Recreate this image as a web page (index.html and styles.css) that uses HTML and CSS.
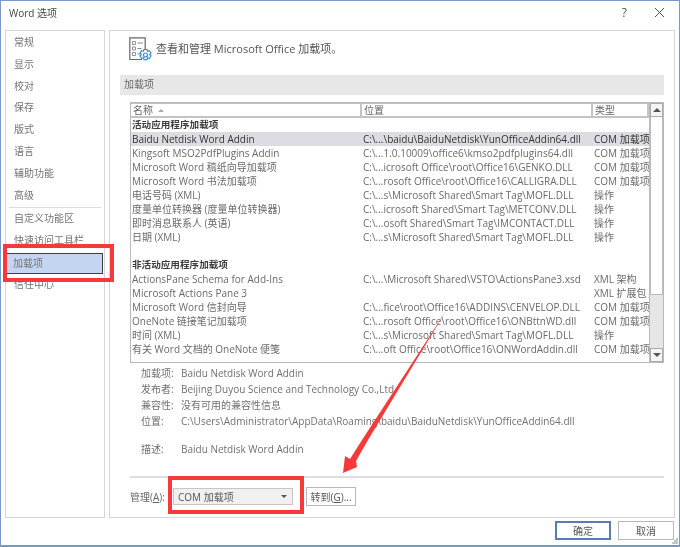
FILE: index.html
```html
<!DOCTYPE html>
<html lang="zh-CN">
<head>
<meta charset="utf-8">
<title>Word 选项</title>
<link rel="stylesheet" href="styles.css">
</head>
<body>
<div class="window">
  <header class="titlebar">
    <span class="title">Word 选项</span>
    <span class="help">?</span>
    <svg class="close" width="11" height="11" viewBox="0 0 11 11"><path d="M1 1l9 9M10 1l-9 9" stroke="#555" stroke-width="1" fill="none"/></svg>
  </header>
  <main class="main">
    <nav class="nav">
      <div class="nav-item">常规</div>
      <div class="nav-item">显示</div>
      <div class="nav-item">校对</div>
      <div class="nav-item">保存</div>
      <div class="nav-item">版式</div>
      <div class="nav-item">语言</div>
      <div class="nav-item">辅助功能</div>
      <div class="nav-item">高级</div>
      <div class="nav-sep"></div>
      <div class="nav-item">自定义功能区</div>
      <div class="nav-item">快速访问工具栏</div>
      <div class="nav-item selected">加载项</div>
      <div class="nav-item">信任中心</div>
    </nav>
    <section class="panel">
      <div class="heading">
        <svg class="heading-icon" width="24" height="25" viewBox="0 0 24 25">
          <path d="M13 22.500H.8V.8h15.400V13" fill="#fff" stroke="#666" stroke-width="1.200"/>
          <path d="M3.500 4.500h3v3h-3zM3.500 10h3v3h-3zM3.500 15.500h3v3h-3z" fill="none" stroke="#888" stroke-width=".9"/>
          <path d="M8.500 6h5.500M8.500 11.500h4M8.500 17h2.500" stroke="#888" stroke-width="1"/>
          <path d="M15 12.500h3l.5 1.800 1.800-.6 1.700 2.500-1.300 1.300 1.300 1.500-1.700 2.500-1.800-.7-.5 1.900h-3l-.5-1.900-1.800.7-1.700-2.500 1.300-1.500-1.300-1.300 1.700-2.500 1.800.6z" fill="#fff" stroke="#2f8fd8" stroke-width="1.200" stroke-linejoin="round"/>
          <circle cx="16.500" cy="18" r="2" fill="none" stroke="#2f8fd8" stroke-width="1.200"/>
        </svg>
        <span class="heading-text">查看和管理 Microsoft Office 加载项。</span>
      </div>
      <div class="section-bar">加载项</div>
      <div class="table-box">
        <div class="table">
          <div class="row head">
            <div class="th">名称 <i class="sort"></i></div>
            <div class="th">位置</div>
            <div class="th">类型</div>
          </div>
          <div class="group">活动应用程序加载项</div>
          <div class="row active"><span>Baidu Netdisk Word Addin</span><span>C:\...\baidu\BaiduNetdisk\YunOfficeAddin64.dll</span><span>COM 加载项</span></div>
          <div class="row"><span>Kingsoft MSO2PdfPlugins Addin</span><span>C:\...1.0.10009\office6\kmso2pdfplugins64.dll</span><span>COM 加载项</span></div>
          <div class="row"><span>Microsoft Word 稿纸向导加载项</span><span>C:\...icrosoft Office\root\Office16\GENKO.DLL</span><span>COM 加载项</span></div>
          <div class="row"><span>Microsoft Word 书法加载项</span><span>C:\...rosoft Office\root\Office16\CALLIGRA.DLL</span><span>COM 加载项</span></div>
          <div class="row"><span>电话号码 (XML)</span><span>C:\...s\Microsoft Shared\Smart Tag\MOFL.DLL</span><span>操作</span></div>
          <div class="row"><span>度量单位转换器 (度量单位转换器)</span><span>C:\...icrosoft Shared\Smart Tag\METCONV.DLL</span><span>操作</span></div>
          <div class="row"><span>即时消息联系人 (英语)</span><span>C:\...osoft Shared\Smart Tag\IMCONTACT.DLL</span><span>操作</span></div>
          <div class="row"><span>日期 (XML)</span><span>C:\...s\Microsoft Shared\Smart Tag\MOFL.DLL</span><span>操作</span></div>
          <div class="group spaced">非活动应用程序加载项</div>
          <div class="row"><span>ActionsPane Schema for Add-Ins</span><span>C:\...\Microsoft Shared\VSTO\ActionsPane3.xsd</span><span>XML 架构</span></div>
          <div class="row"><span>Microsoft Actions Pane 3</span><span></span><span>XML 扩展包</span></div>
          <div class="row"><span>Microsoft Word 信封向导</span><span>C:\...fice\root\Office16\ADDINS\CENVELOP.DLL</span><span>COM 加载项</span></div>
          <div class="row"><span>OneNote 链接笔记加载项</span><span>C:\...rosoft Office\root\Office16\ONBttnWD.dll</span><span>COM 加载项</span></div>
          <div class="row"><span>时间 (XML)</span><span>C:\...s\Microsoft Shared\Smart Tag\MOFL.DLL</span><span>操作</span></div>
          <div class="row"><span>有关 Word 文档的 OneNote 便笺</span><span>C:\...oft Office\root\Office16\ONWordAddin.dll</span><span>COM 加载项</span></div>
        </div>
        <div class="scrollbar">
          <div class="sb-btn"><i class="tri up"></i></div>
          <div class="sb-thumb"></div>
          <div class="sb-track"></div>
          <div class="sb-btn"><i class="tri down"></i></div>
        </div>
      </div>
      <dl class="details">
        <dt>加载项:</dt><dd>Baidu Netdisk Word Addin</dd>
        <dt>发布者:</dt><dd>Beijing Duyou Science and Technology Co.,Ltd</dd>
        <dt>兼容性:</dt><dd>没有可用的兼容性信息</dd>
        <dt>位置:</dt><dd>C:\Users\Administrator\AppData\Roaming\baidu\BaiduNetdisk\YunOfficeAddin64.dll</dd>
        <dt class="gap">描述:</dt><dd class="gap">Baidu Netdisk Word Addin</dd>
      </dl>
      <div class="manage">
        <span class="manage-label">管理(<u>A</u>):</span>
        <div class="combo"><span>COM 加载项</span><i class="tri down"></i></div>
        <button class="btn goto" type="button">转到(<u>G</u>)...</button>
      </div>
    </section>
  </main>
  <footer class="footer">
    <button class="btn action primary" type="button">确定</button>
    <button class="btn action" type="button">取消</button>
  </footer>
  <svg class="grip" width="8" height="8" viewBox="0 0 8 8"><path d="M5 1h2v2H5zM3 3h2v2H3zM5 3h2v2H5zM1 5h2v2H1zM3 5h2v2H3zM5 5h2v2H5z" fill="#c4c4c4"/></svg>
  <svg class="annotations" width="680" height="547" viewBox="0 0 680 547">
    <rect x="5" y="246" width="107" height="34" fill="none" stroke="#f63a3a" stroke-width="4"/>
    <rect x="170" y="478" width="132" height="34" fill="none" stroke="#f63a3a" stroke-width="4"/>
    <path d="M446 311L368 440L356 461L357 467L343 473L345 456L350 459L362 440Z" fill="#f63a3a"/>
  </svg>
</div>
</body>
</html>
```
FILE: styles.css
```css
* { box-sizing: border-box; }
html, body { margin: 0; padding: 0; background: #fff; }
body {
  width: 680px;
  height: 547px;
  overflow: hidden;
  font-family: "Open Sans", "Noto Sans CJK SC", sans-serif;
  font-size: 10px;
  color: #6a6a6a;
}
.window {
  position: relative;
  width: 680px;
  height: 547px;
  display: flex;
  flex-direction: column;
  border: 1px solid #7a97c6;
  border-bottom-width: 2px;
  background: #fff;
  filter: blur(.35px);
}
.titlebar {
  height: 29px;
  display: flex;
  align-items: center;
  padding: 0 14px 7px 8px;
  flex: none;
}
.title { font-size: 10px; color: #444; flex: 1; }
.help { font-size: 12px; color: #555; margin-right: 27px; }
.close { flex: none; }
.main {
  display: flex;
  gap: 4px;
  padding: 0 4px;
  height: 488px;
  flex: none;
}
.nav {
  flex: none;
  width: 100px;
  border: 1px solid #d6d6d6;
  padding: 1px 1px 0;
  display: flex;
  flex-direction: column;
}
.nav-item {
  height: 21.800px;
  line-height: 21.800px;
  padding-left: 7px;
  color: #737373;
}
.nav-sep {
  height: 1px;
  flex: none;
  background: #dcdcdc;
  margin: 1px 2px 0;
}
.nav-item.selected {
  background: #c3d5f0;
  border: 1px solid #3f3f3f;
  border-left: none;
  padding-left: 6px;
  line-height: 19px;
  margin-top: 1px;
  height: 21px;
}
.panel {
  flex: 1;
  min-width: 0;
  border: 1px solid #d6d6d6;
  padding: 6px 10px 0;
  display: flex;
  flex-direction: column;
}
.heading {
  display: flex;
  align-items: center;
  height: 25px;
  padding-left: 9px;
  gap: 3px;
  font-size: 11px;
  color: #555;
}
.heading-text { padding-bottom: 3px; }
.section-bar {
  margin-top: 13px;
  height: 20px;
  line-height: 18px;
  background: #e7e7e7;
  padding-left: 4px;
  color: #666;
}
.table-box {
  margin: 7px 0 0 10px;
  height: 261px;
  border: 1px solid #b9b9b9;
  display: flex;
  flex: none;
}
.table { flex: 1; min-width: 0; }
.row {
  display: grid;
  grid-template-columns: 231px 231px 1fr;
  height: 14px;
  line-height: 14px;
  padding-left: 1px;
  white-space: nowrap;
  overflow: hidden;
}
.row.active { background: #dcdce2; color: #333; }
.row.head { height: 15px; padding-left: 0; }
.th {
  border: 2px solid #c4c4c4;
  border-left-width: 0;
  border-top-width: 1px;
  line-height: 12px;
  height: 15px;
  padding-left: 2px;
  color: #666;
}
.sort {
  display: inline-block;
  width: 0;
  height: 0;
  margin: 0 0 2px 2px;
  border: 3px solid transparent;
  border-top-width: 0;
  border-bottom: 3px solid #aaa;
}
.group {
  height: 14px;
  line-height: 14px;
  padding-left: 1px;
  font-size: 9.600px;
  color: #3d3d3d;
  font-weight: 700;
}
.group.spaced { margin-top: 14px; }
.scrollbar {
  flex: none;
  width: 14px;
  display: flex;
  flex-direction: column;
  border-left: 1px solid #bbb;
}
.sb-btn {
  height: 14px;
  flex: none;
  background: #f5f5f5;
  border: 1px solid #aaa;
  display: flex;
  align-items: center;
  justify-content: center;
}
.sb-thumb {
  height: 178px;
  flex: none;
  background: #fff;
  border-right: 1px solid #bbb;
  border-left: 1px solid #bbb;
  border-bottom: 1px solid #bbb;
}
.sb-track { flex: 1; background: #e6e6e6; }
.tri { display: block; width: 0; height: 0; border: 4px solid transparent; }
.tri.up { border-top-width: 0; border-bottom: 4px solid #555; }
.tri.down { border-bottom-width: 0; border-top: 4px solid #555; }
.details {
  margin: 2px 0 0 21px;
  display: grid;
  grid-template-columns: 40px 1fr;
  grid-auto-rows: 16px;
  line-height: 16px;
  white-space: nowrap;
  color: #707070;
}
.details dt, .details dd { margin: 0; }
.details .gap { margin-top: 12px; height: 16px; grid-row-end: span 2; }
.manage {
  margin: 15px 0 0 10px;
  border-top: 2px solid #dedede;
  padding-top: 9px;
  display: flex;
  align-items: center;
  color: #666;
}
.manage-label { width: 43px; }
.combo {
  width: 120px;
  height: 17px;
  border: 1px solid #c6c6c6;
  background: #f0f0f0;
  display: flex;
  align-items: center;
  justify-content: space-between;
  padding: 0 5px 0 4px;
  color: #555;
}
.combo .tri { border-width: 3.500px; border-bottom-width: 0; }
.btn {
  font: inherit;
  color: #555;
  background: #fff;
  border: 1px solid #b8b8b8;
  padding: 0;
}
.goto { margin-left: 13px; width: 50px; height: 19px; }
.footer {
  display: flex;
  justify-content: flex-end;
  gap: 7px;
  padding: 3px 5px 0 0;
}
.action { width: 56px; height: 19px; }
.primary { border: 2px solid #5a7cb4; }
.grip { position: absolute; right: 0; bottom: 0; }
.annotations { position: absolute; left: -1px; top: -1px; pointer-events: none; }
```
